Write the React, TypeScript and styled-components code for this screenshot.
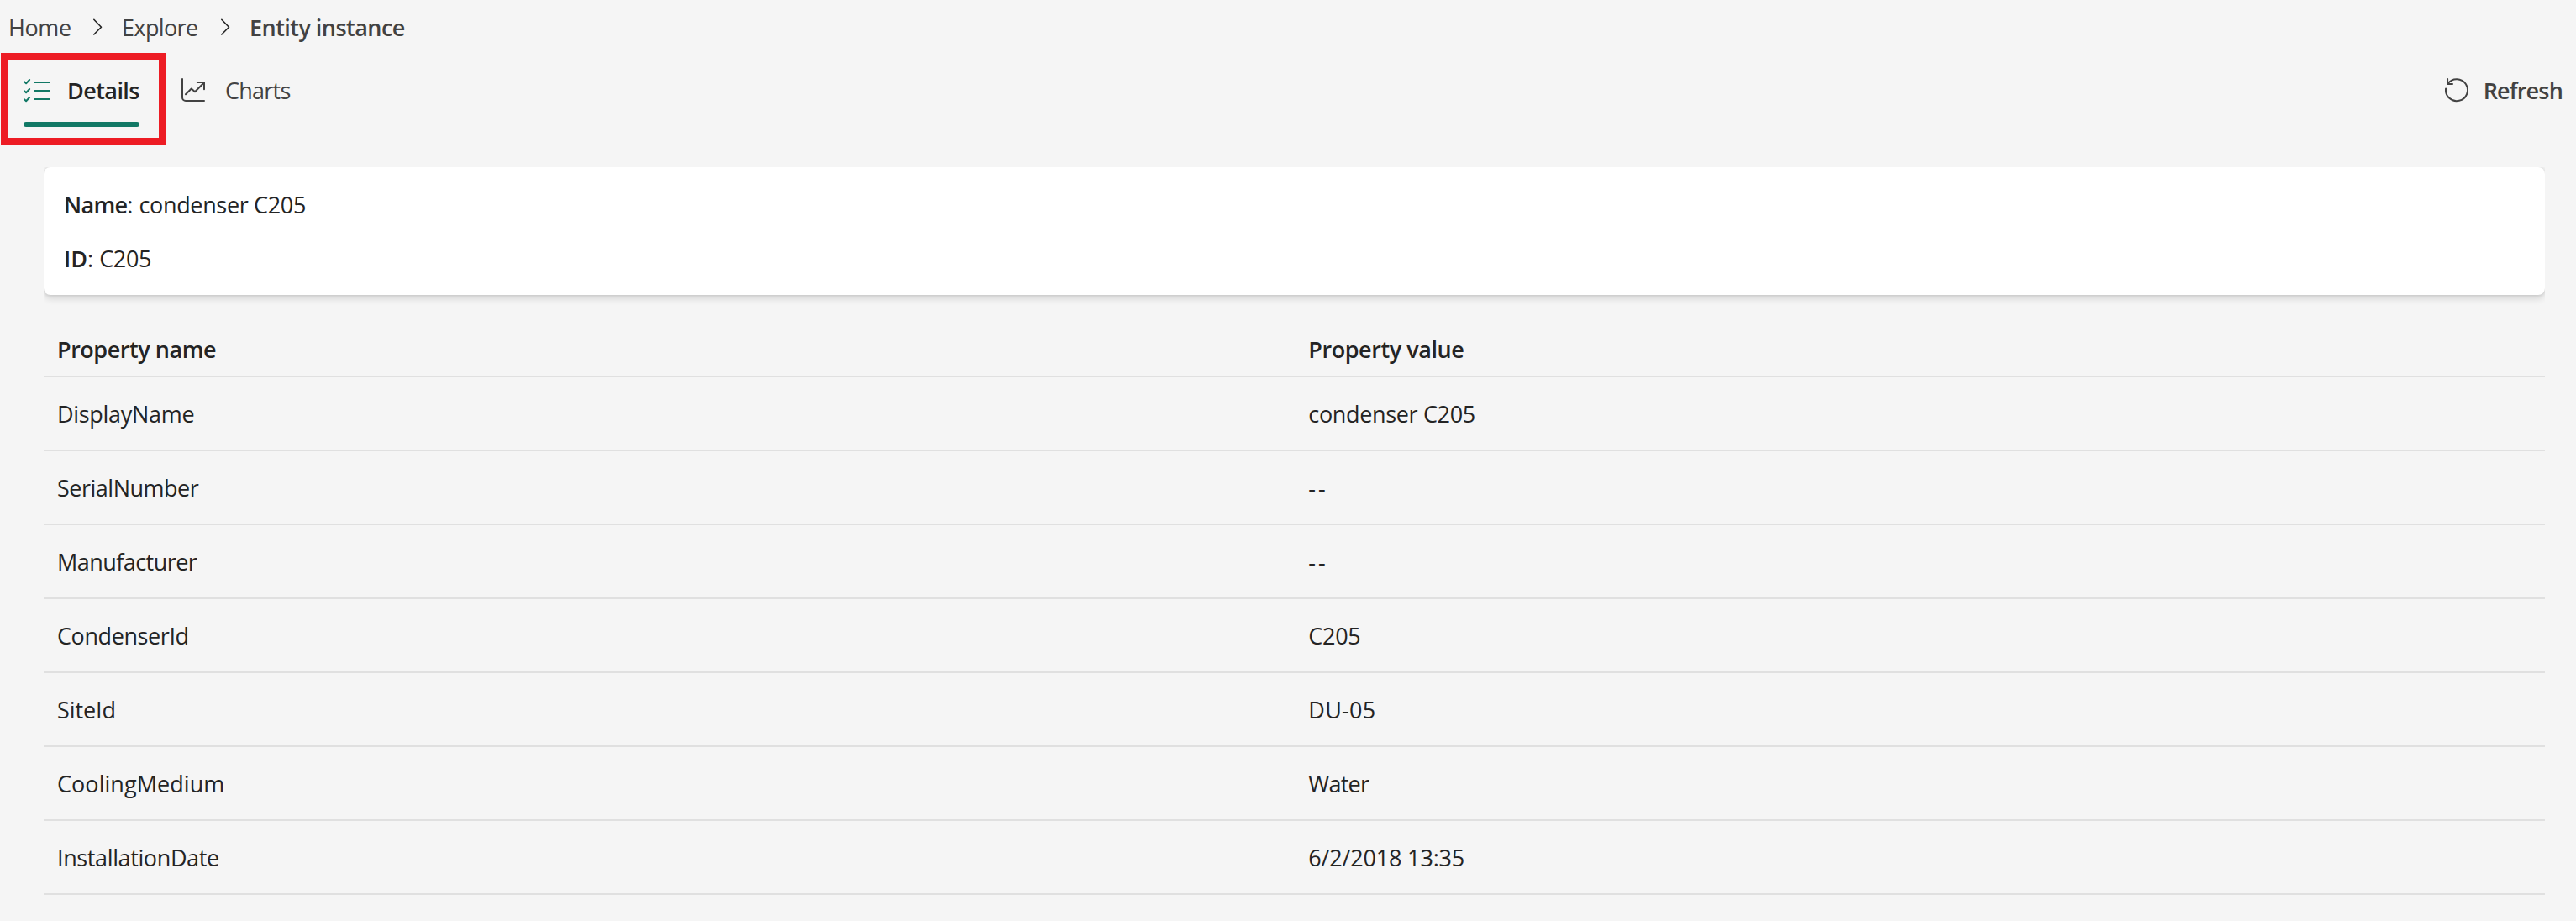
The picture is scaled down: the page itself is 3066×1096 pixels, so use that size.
import React from 'react';
import styled, { createGlobalStyle } from 'styled-components';

const color = {
  page: '#f5f5f5',
  card: '#ffffff',
  text: '#242424',
  textMuted: '#424242',
  brand: '#117865',
  line: '#e0e0e0',
  highlight: '#ed1c24',
};

const GlobalStyle = createGlobalStyle`
  * { box-sizing: border-box; }
  body {
    margin: 0;
    background: ${color.page};
    color: ${color.text};
    font-family: 'Segoe UI', 'Open Sans', 'Noto Sans', sans-serif;
    font-size: 27px;
    line-height: 39px;
  }
`;

const Page = styled.main`
  display: flex;
  flex-direction: column;
  height: 1096px;
  overflow: hidden;
`;

const Text = styled.span<{ $tracking?: number; $strong?: boolean }>`
  white-space: pre;
  font-weight: ${p => (p.$strong ? 600 : 400)};
  letter-spacing: ${p => p.$tracking ?? 0}px;
`;

const Breadcrumb = styled.nav`
  display: flex;
  padding: 13px 10px 0;
  height: 52px;
  color: ${color.textMuted};
`;

const Crumb = styled.div<{ $width?: number }>`
  width: ${p => (p.$width ? `${p.$width}px` : 'auto')};
`;

const Separator = styled.svg`
  flex: none;
  width: 60px;
  height: 39px;
  fill: none;
  stroke: ${color.text};
  stroke-width: 1.6;
  stroke-linecap: round;
  stroke-linejoin: round;
`;

const Toolbar = styled.div`
  display: flex;
  justify-content: space-between;
  height: 147px;
  padding: 36px 16px 0 28px;
`;

const Tabs = styled.div`
  display: flex;
  gap: 50px;
`;

const Tab = styled.div<{ $active?: boolean }>`
  position: relative;
  display: flex;
  height: 63px;
  color: ${p => (p.$active ? color.text : color.textMuted)};
  ${p => p.$active && `
    width: 138px;
    &::after {
      content: '';
      position: absolute;
      left: 0;
      right: 0;
      bottom: 0;
      height: 6px;
      border-radius: 3px;
      background: ${color.brand};
    }
  `}
`;

const Highlight = styled.div`
  position: absolute;
  left: -27px;
  top: -25px;
  width: 196px;
  height: 109px;
  border: 8px solid ${color.highlight};
  pointer-events: none;
`;

const Icon = styled.svg<{ $width: number; $gap: number; $color?: string }>`
  flex: none;
  width: ${p => p.$width}px;
  height: 40px;
  margin-right: ${p => p.$gap}px;
  fill: none;
  stroke: ${p => p.$color ?? color.textMuted};
  stroke-width: 2;
  stroke-linecap: round;
  stroke-linejoin: round;
`;

const RefreshButton = styled.div`
  display: flex;
  height: 40px;
  color: ${color.textMuted};
`;

const Content = styled.section`
  display: flex;
  flex-direction: column;
  gap: 32px;
  margin: 0 37px 0 52px;
  /* Trims the card shadow at the content edges. */
  clip-path: inset(0);
`;

const Card = styled.div`
  display: flex;
  flex-direction: column;
  gap: 25px;
  height: 152px;
  padding: 25px 24px;
  border-radius: 8px;
  background: ${color.card};
  box-shadow: 0 0 4px rgba(0, 0, 0, 0.12), 0 4px 8px rgba(0, 0, 0, 0.14);
`;

const Field = styled.div`
  display: flex;
`;

const Table = styled.div`
  display: flex;
  flex-direction: column;
`;

const Row = styled.div<{ $head?: boolean }>`
  display: grid;
  grid-template-columns: 1fr 1fr;
  height: ${p => (p.$head ? 66 : 88)}px;
  padding-top: ${p => (p.$head ? 13 : 24)}px;
  border-bottom: 2px solid ${color.line};
`;

const Cell = styled.div`
  padding: 0 16px;

  & + & {
    padding-left: 16.8px;
  }
`;

type Label = { text: string; tracking: number };

const rows: { name: Label; value: Label }[] = [
  { name: { text: 'DisplayName', tracking: -0.3 }, value: { text: 'condenser C205', tracking: -0.34 } },
  { name: { text: 'SerialNumber', tracking: -0.5 }, value: { text: '--', tracking: 3 } },
  { name: { text: 'Manufacturer', tracking: -0.55 }, value: { text: '--', tracking: 3 } },
  { name: { text: 'CondenserId', tracking: -0.41 }, value: { text: 'C205', tracking: -0.3 } },
  { name: { text: 'SiteId', tracking: -0.08 }, value: { text: 'DU-05', tracking: 0.27 } },
  { name: { text: 'CoolingMedium', tracking: 0.05 }, value: { text: 'Water', tracking: -0.75 } },
  { name: { text: 'InstallationDate', tracking: -0.38 }, value: { text: '6/2/2018 13:35', tracking: -0.18 } },
];

const Chevron = () => (
  <Separator viewBox="0 0 60 39" aria-hidden="true">
    <path d="M26.8 10.3 35.5 19.2 26.8 28" />
  </Separator>
);

const TaskListIcon = () => (
  <Icon $width={32} $gap={20} $color={color.brand} viewBox="0 0 32 40" aria-hidden="true">
    <path d="M13 10H31M13 20H31M13 30H31" />
    <path d="M1 9.2 3.1 11.2 7.1 7M1 20.2 3.1 22.2 7.1 18M1 30.2 3.1 32.2 7.1 28" />
  </Icon>
);

const ChartIcon = () => (
  <Icon $width={28} $gap={24} viewBox="0 0 28 40" aria-hidden="true">
    <path d="M1 6V28a4 4 0 0 0 4 4H27" />
    <path d="M5 24.3 11.8 17.5 16 21.3 27 10.3" />
    <path d="M18.8 10H27V18.2" />
  </Icon>
);

const RefreshIcon = () => (
  <Icon $width={28} $gap={18} viewBox="0 0 28 40" aria-hidden="true">
    <path d="M1.1 17.5A13 13 0 1 0 3.5 11.5" />
    <path d="M3.1 6V12H9" />
  </Icon>
);

export default function App() {
  return (
    <>
      <GlobalStyle />
      <Page>
        <Breadcrumb>
          <Crumb $width={75}><Text $tracking={-0.4}>Home</Text></Crumb>
          <Chevron />
          <Crumb $width={92}><Text $tracking={-0.63}>Explore</Text></Crumb>
          <Chevron />
          <Crumb><Text $strong $tracking={-0.53}>Entity instance</Text></Crumb>
        </Breadcrumb>

        <Toolbar>
          <Tabs>
            <Tab $active>
              <TaskListIcon />
              <Text $strong $tracking={-0.57}>Details</Text>
              <Highlight />
            </Tab>
            <Tab>
              <ChartIcon />
              <Text $tracking={-0.76}>Charts</Text>
            </Tab>
          </Tabs>
          <RefreshButton>
            <RefreshIcon />
            <Text $strong $tracking={-0.82}>Refresh</Text>
          </RefreshButton>
        </Toolbar>

        <Content>
          <Card>
            <Field>
              <Text $strong $tracking={-0.7}>Name</Text>
              <Text>: </Text>
              <Text $tracking={-0.34}>condenser C205</Text>
            </Field>
            <Field>
              <Text $strong>ID</Text>
              <Text>: </Text>
              <Text $tracking={-0.3}>C205</Text>
            </Field>
          </Card>

          <Table>
            <Row $head>
              <Cell><Text $strong $tracking={-0.46}>Property name</Text></Cell>
              <Cell><Text $strong $tracking={-0.44}>Property value</Text></Cell>
            </Row>
            {rows.map(({ name, value }) => (
              <Row key={name.text}>
                <Cell><Text $tracking={name.tracking}>{name.text}</Text></Cell>
                <Cell><Text $tracking={value.tracking}>{value.text}</Text></Cell>
              </Row>
            ))}
          </Table>
        </Content>
      </Page>
    </>
  );
}
